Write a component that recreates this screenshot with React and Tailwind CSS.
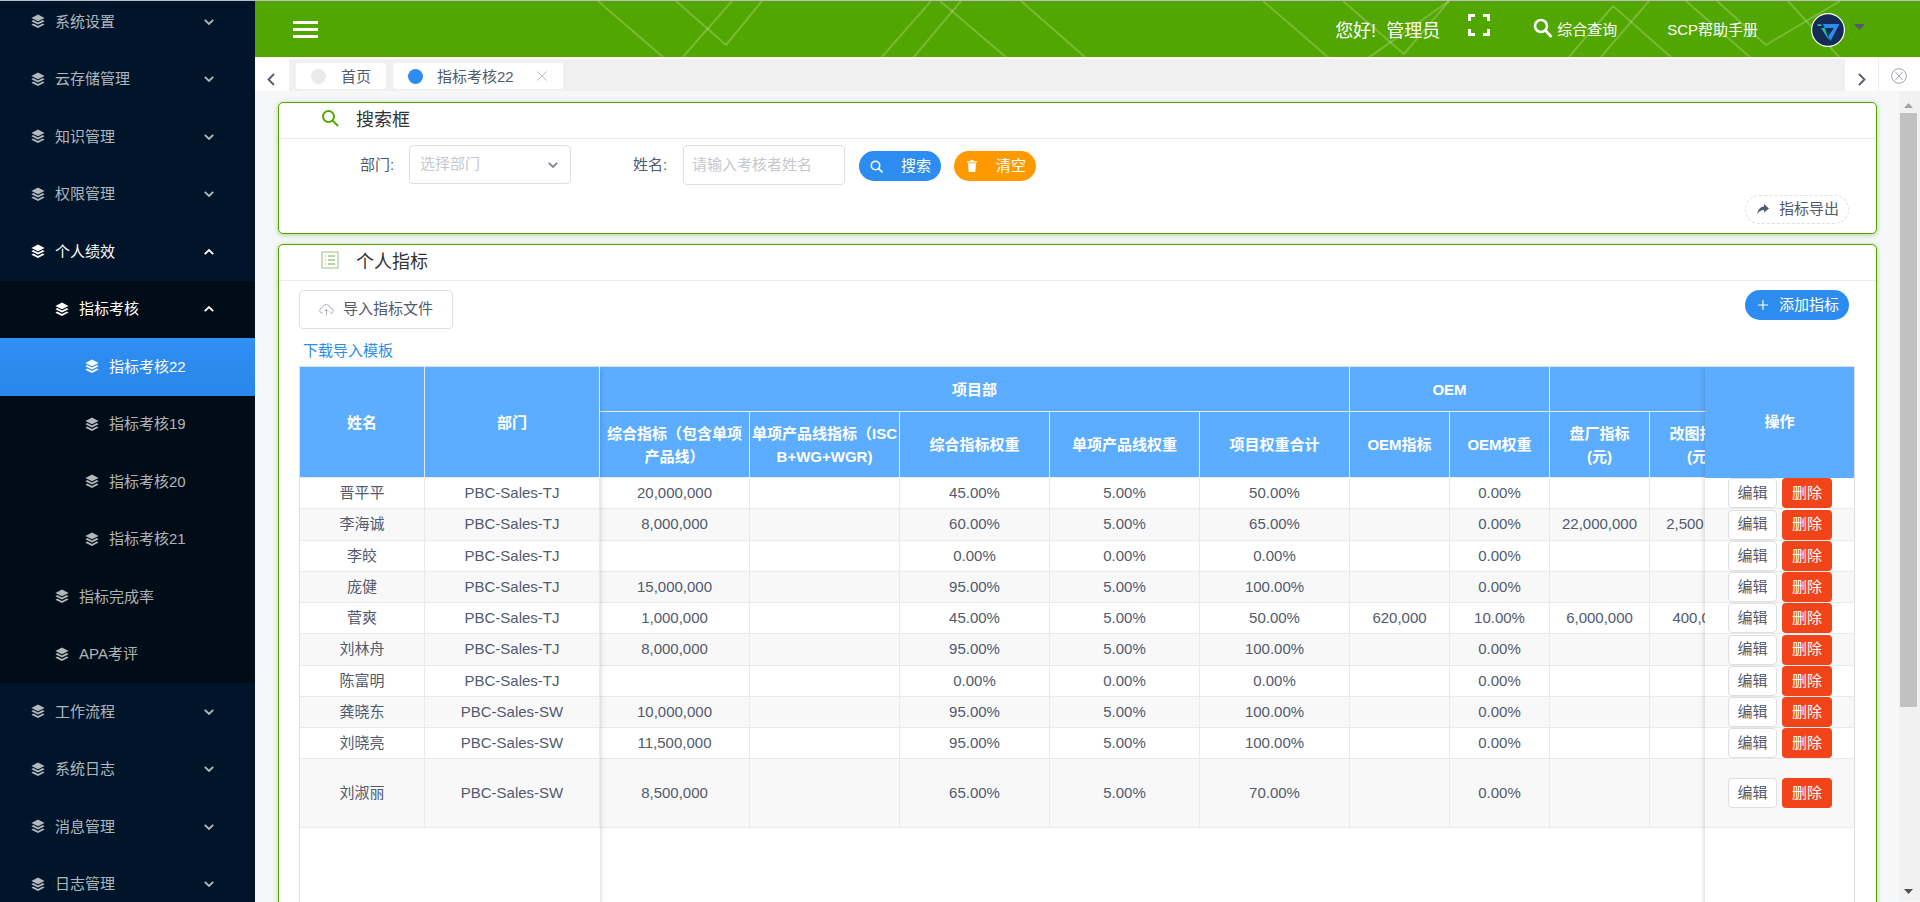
import React from 'react';

const Layers = ({ className = 'w-[14px] h-[15px]' }) => (
  <svg viewBox="0 0 14 15" className={`${className} fill-current shrink-0`}>
    <path d="M7 .5 13.6 3.900 7 7.300.4 3.900Z" />
    <path d="M2.200 6.100 7 8.600l4.800-2.500 1.800 1.100L7 10.600.4 7.200Z" />
    <path d="M2.200 9.500 7 12l4.800-2.500 1.800 1.100L7 14.100.4 10.700Z" />
  </svg>
);

const Chevron = ({ up }) => (
  <svg viewBox="0 0 10 6" className="w-[10px] h-[6px] shrink-0">
    <path d={up ? 'M.8 5.200 5 1l4.200 4.200' : 'M.8.8 5 5 9.200.8'} fill="none" stroke="currentColor" strokeWidth="1.800" />
  </svg>
);

const MenuItem = ({ label, indent = 'pl-[31px]', tone = 'text-white/70', chevron, up, cls = '' }) => (
  <div className={`h-[57.5px] flex items-center ${indent} pr-[41px] ${tone} ${cls} text-[15px]`}>
    <Layers />
    <span className="ml-[10px] flex-1 whitespace-nowrap">{label}</span>
    {chevron && <Chevron up={up} />}
  </div>
);

const Sidebar = () => (
  <aside className="w-[255px] shrink-0 bg-[#001529] overflow-hidden">
    <div className="-mt-[8px]">
      <MenuItem label="系统设置" chevron />
      <MenuItem label="云存储管理" chevron />
      <MenuItem label="知识管理" chevron />
      <MenuItem label="权限管理" chevron />
      <MenuItem label="个人绩效" chevron up tone="text-white" />
      <div className="bg-[#000c17]">
        <MenuItem label="指标考核" indent="pl-[55px]" chevron up tone="text-white" />
        <MenuItem label="指标考核22" indent="pl-[85px]" tone="text-white" cls="bg-gradient-to-b from-[#2f8ff2] to-[#2a86ea]" />
        <MenuItem label="指标考核19" indent="pl-[85px]" />
        <MenuItem label="指标考核20" indent="pl-[85px]" />
        <MenuItem label="指标考核21" indent="pl-[85px]" />
        <MenuItem label="指标完成率" indent="pl-[55px]" />
        <MenuItem label="APA考评" indent="pl-[55px]" />
      </div>
      <MenuItem label="工作流程" chevron />
      <MenuItem label="系统日志" chevron />
      <MenuItem label="消息管理" chevron />
      <MenuItem label="日志管理" chevron />
    </div>
  </aside>
);

const headerLines = [
  [343, 0, 409, 57], [421, 0, 471, 44], [471, 44, 507, 0], [477, 0, 427, 57],
  [676, 0, 626, 57], [685, 0, 752, 57], [706, 0, 658, 57], [766, 0, 831, 57],
  [1008, 0, 1074, 57], [1088, 0, 1149, 53], [1149, 53, 1194, 0], [1194, 0, 1113, 57],
  [1313, 57, 1358, 5], [1358, 5, 1417, 57], [1394, 0, 1345, 57], [1431, 0, 1496, 57],
  [1462, 0, 1511, 44], [1511, 44, 1585, 0], [1533, 0, 1585, 57],
];

const Header = () => (
  <header className="relative h-[56px] shrink-0 bg-[#52a600] flex items-center overflow-hidden text-white">
    <svg className="absolute left-0 top-0 w-[1665px] h-[56px]" viewBox="0 0 1665 56">
      {headerLines.map((l, i) => (
        <line key={i} x1={l[0]} y1={l[1]} x2={l[2]} y2={l[3]} stroke="#fff" strokeOpacity="0.22" strokeWidth="2" />
      ))}
    </svg>
    <div className="relative ml-[38px] flex flex-col gap-[4px] w-[25px]">
      <div className="h-[3px] bg-white" />
      <div className="h-[3px] bg-white" />
      <div className="h-[3px] bg-white" />
    </div>
    <div className="relative ml-auto flex items-center">
      <span className="text-[18px] whitespace-pre mt-[5px]">您好!  管理员</span>
      <svg viewBox="0 0 22 22" className="ml-[28px] w-[22px] h-[22px] -mt-[8px]" fill="none" stroke="#fff" strokeWidth="3">
        <path d="M1.500 7V1.500H7M15 1.500h5.500V7M20.500 15v5.500H15M7 20.500H1.500V15" />
      </svg>
      <svg viewBox="0 0 20 20" className="ml-[43px] w-[20px] h-[20px] -mt-[2px]" fill="none" stroke="#fff" strokeWidth="2.600">
        <circle cx="8" cy="8" r="6" />
        <path d="m12.500 12.500 6 6.500" />
      </svg>
      <span className="ml-[4px] text-[15px] mt-[2px] whitespace-nowrap">综合查询</span>
      <span className="ml-[50px] text-[15px] mt-[2px] whitespace-nowrap">SCP帮助手册</span>
      <svg viewBox="0 0 34 34" className="ml-[53px] w-[34px] h-[34px] mt-[2px]">
        <circle cx="17" cy="17" r="16.400" fill="#152a55" stroke="#fff" strokeWidth="1.200" />
        <path d="M12 11h16.500l-9 17-2.400-4.500 5.800-8.500H13.500Z" fill="#2d8cf0" />
        <path d="M6 11.200h4l.8 1.800H7ZM10 15h3.800l4.400 12.500Z" fill="#13c2a3" />
      </svg>
      <svg viewBox="0 0 11 6" className="ml-[9px] mr-[55px] w-[11px] h-[6px] -mt-[4px]">
        <path d="M0 0h11L5.500 6Z" fill="#515a6e" />
      </svg>
    </div>
  </header>
);

const TabBar = () => (
  <div className="h-[34px] shrink-0 bg-white flex text-[#515a6e]">
    <div className="w-[34px] shrink-0 flex items-center justify-center pt-[10px] pr-[2px]">
      <svg viewBox="0 0 8 13" className="w-[8px] h-[13px]"><path d="M7 1 1.500 6.500 7 12" fill="none" stroke="#515a6e" strokeWidth="1.800" /></svg>
    </div>
    <div className="flex-1 mt-[2px] bg-[#f0f0f0] flex items-start pl-[7px] gap-[7px] pt-[4px]">
      <div className="w-[90px] h-[26px] bg-white rounded-[3px] flex items-center pl-[15px]">
        <span className="w-[15px] h-[15px] rounded-full bg-[#e8eaec]" />
        <span className="ml-[15px] mt-[2px] text-[15px] whitespace-nowrap">首页</span>
      </div>
      <div className="w-[170px] h-[26px] bg-white rounded-[3px] flex items-center pl-[15px]">
        <span className="w-[15px] h-[15px] rounded-full bg-[#2d8cf0]" />
        <span className="ml-[14px] mt-[2px] text-[15px] whitespace-nowrap">指标考核22</span>
        <svg viewBox="0 0 10 10" className="ml-[23px] w-[10px] h-[10px]"><path d="M.5.5l9 9M9.500.5l-9 9" stroke="#b5b8be" strokeWidth="1" /></svg>
      </div>
    </div>
    <div className="w-[34px] shrink-0 flex items-center justify-center pt-[10px] border-r border-[#f0f0f0]">
      <svg viewBox="0 0 8 13" className="w-[8px] h-[13px]"><path d="M1 1l5.500 5.500L1 12" fill="none" stroke="#515a6e" strokeWidth="1.800" /></svg>
    </div>
    <div className="w-[41px] shrink-0 flex items-center justify-center mt-[3px] pr-[2px]">
      <svg viewBox="0 0 16 16" className="w-[16px] h-[16px]" fill="none" stroke="#9ea2ab" strokeWidth="1">
        <circle cx="8" cy="8" r="7.300" /><path d="m4.500 4 7 8M11.500 4l-7 8" />
      </svg>
    </div>
  </div>
);

const Card = ({ title, icon, children, cls = '' }) => (
  <section className={`bg-white border border-[#52a600] rounded-[5px] shadow-[0_1px_5px_rgba(82,166,0,0.45)] ${cls}`}>
    <div className="h-[36px] border-b border-[#e8eaec] flex items-center pl-[42px]">
      {icon}
      <span className="ml-[17px] -mt-[2px] text-[18px] text-[#333] leading-none">{title}</span>
    </div>
    {children}
  </section>
);

const columns = ['w-[125px]', 'w-[175px]', 'w-[150px]', 'w-[150px]', 'w-[150px]', 'w-[150px]', 'w-[150px]', 'w-[100px]', 'w-[100px]', 'w-[100px]', 'w-[100px]', 'w-[104px]'];

const rows = [
  { h: 'h-[31px]', n: '晋平平', d: 'PBC-Sales-TJ', v: ['20,000,000', '', '45.00%', '5.00%', '50.00%', '', '0.00%', '', ''] },
  { h: 'h-[32px]', n: '李海诚', d: 'PBC-Sales-TJ', v: ['8,000,000', '', '60.00%', '5.00%', '65.00%', '', '0.00%', '22,000,000', '2,500,000'] },
  { h: 'h-[31px]', n: '李皎', d: 'PBC-Sales-TJ', v: ['', '', '0.00%', '0.00%', '0.00%', '', '0.00%', '', ''] },
  { h: 'h-[31px]', n: '庞健', d: 'PBC-Sales-TJ', v: ['15,000,000', '', '95.00%', '5.00%', '100.00%', '', '0.00%', '', ''] },
  { h: 'h-[31px]', n: '菅爽', d: 'PBC-Sales-TJ', v: ['1,000,000', '', '45.00%', '5.00%', '50.00%', '620,000', '10.00%', '6,000,000', '400,000'] },
  { h: 'h-[32px]', n: '刘林舟', d: 'PBC-Sales-TJ', v: ['8,000,000', '', '95.00%', '5.00%', '100.00%', '', '0.00%', '', ''] },
  { h: 'h-[31px]', n: '陈富明', d: 'PBC-Sales-TJ', v: ['', '', '0.00%', '0.00%', '0.00%', '', '0.00%', '', ''] },
  { h: 'h-[31px]', n: '龚晓东', d: 'PBC-Sales-SW', v: ['10,000,000', '', '95.00%', '5.00%', '100.00%', '', '0.00%', '', ''] },
  { h: 'h-[31px]', n: '刘晓亮', d: 'PBC-Sales-SW', v: ['11,500,000', '', '95.00%', '5.00%', '100.00%', '', '0.00%', '', ''] },
  { h: 'h-[69px]', n: '刘淑丽', d: 'PBC-Sales-SW', v: ['8,500,000', '', '65.00%', '5.00%', '70.00%', '', '0.00%', '', ''] },
];

const th = 'border-r border-b border-[#e8eaec] font-bold text-white text-center text-[15px] leading-[23px] p-0 whitespace-nowrap overflow-hidden';
const td = 'border-r border-b border-[#e8eaec] text-center p-0 whitespace-nowrap overflow-hidden';

const DataTable = () => (
  <div className="relative mt-[5px] ml-[20px] mr-[21px] h-[600px] border border-[#dcdee2] overflow-hidden">
    <table className="table-fixed border-separate border-spacing-0 w-[1554px] text-[15px] text-[#515a6e]">
      <colgroup>
        {columns.map((c, i) => <col key={i} className={c} />)}
      </colgroup>
      <thead className="bg-[#5cadff]">
        <tr className="h-[45px]">
          <th rowSpan={2} className={th}>姓名</th>
          <th rowSpan={2} className={th}>部门</th>
          <th colSpan={5} className={th}>项目部</th>
          <th colSpan={2} className={th}>OEM</th>
          <th colSpan={3} className={th}></th>
        </tr>
        <tr className="h-[66px]">
          <th className={th}>综合指标（包含单项<br />产品线）</th>
          <th className={th}>单项产品线指标（ISC<br />B+WG+WGR)</th>
          <th className={th}>综合指标权重</th>
          <th className={th}>单项产品线权重</th>
          <th className={th}>项目权重合计</th>
          <th className={th}>OEM指标</th>
          <th className={th}>OEM权重</th>
          <th className={th}>盘厂指标<br />(元)</th>
          <th className={th}>改图指标<br />(元)</th>
          <th className={th}></th>
          <th className={th}></th>
        </tr>
      </thead>
      <tbody>
        {rows.map((r, i) => (
          <tr key={i} className={`${r.h} ${i % 2 ? 'bg-[#f8f8f9]' : 'bg-white'}`}>
            <td className={td}>{r.n}</td>
            <td className={td}>{r.d}</td>
            {r.v.map((v, j) => <td key={j} className={td}>{v}</td>)}
            <td className={td}></td>
            <td className={td}></td>
          </tr>
        ))}
      </tbody>
    </table>

    <div className="absolute left-0 top-0 bottom-0 w-[300px] shadow-[2px_0_6px_-2px_rgba(0,0,0,0.2)] pointer-events-none" />

    <div className="absolute right-0 top-0 bottom-0 w-[149px] bg-white shadow-[-2px_0_6px_-2px_rgba(0,0,0,0.2)] text-[15px]">
      <div className="h-[111px] bg-[#5cadff] flex items-center justify-center font-bold text-white">操作</div>
      {rows.map((r, i) => (
        <div key={i} className={`${r.h} border-b border-[#e8eaec] flex items-center pl-[23px] gap-[5px] ${i % 2 ? 'bg-[#f8f8f9]' : 'bg-white'}`}>
          <button className="w-[49px] h-[30px] bg-white border border-[#dcdee2] rounded-[4px] text-[#515a6e] flex items-center justify-center">编辑</button>
          <button className="w-[50px] h-[30px] bg-[#f14418] rounded-[4px] text-white flex items-center justify-center">删除</button>
        </div>
      ))}
    </div>
  </div>
);

const SearchCard = () => (
  <Card
    title="搜索框"
    icon={
      <svg viewBox="0 0 18 18" className="w-[18px] h-[18px] -mt-[5px]" fill="none" stroke="#52a600" strokeWidth="2">
        <circle cx="7.500" cy="7.500" r="5.500" /><path d="m11.500 11.500 5.500 5.500" />
      </svg>
    }
  >
    <div className="pt-[6px] h-[94px]">
      <div className="flex items-start text-[15px] text-[#515a6e]">
        <span className="ml-[81px] mt-[9px] w-[33px] whitespace-nowrap">部门:</span>
        <div className="ml-[16px] w-[162px] h-[39px] border border-[#dcdee2] rounded-[4px] flex items-center justify-between pl-[10px] pr-[12px]">
          <span className="text-[#c5c8ce] whitespace-nowrap">选择部门</span>
          <span className="text-[#808695]"><Chevron /></span>
        </div>
        <span className="ml-[62px] mt-[9px] w-[34px] whitespace-nowrap">姓名:</span>
        <div className="ml-[16px] w-[162px] h-[40px] border border-[#dcdee2] rounded-[4px] flex items-center pl-[8px]">
          <span className="text-[#c5c8ce] whitespace-nowrap">请输入考核者姓名</span>
        </div>
        <button className="ml-[14px] mt-[6px] w-[82px] h-[30px] rounded-full bg-[#2d8cf0] text-white flex items-center pl-[11px]">
          <svg viewBox="0 0 13 13" className="w-[13px] h-[13px]" fill="none" stroke="#fff" strokeWidth="1.600">
            <circle cx="5.500" cy="5.500" r="4.200" /><path d="m8.500 8.500 4 4" />
          </svg>
          <span className="ml-[18px]">搜索</span>
        </button>
        <button className="ml-[13px] mt-[6px] w-[82px] h-[30px] rounded-full bg-[#ff9900] text-white flex items-center pl-[13px]">
          <svg viewBox="0 0 10 12" className="w-[10px] h-[12px]" fill="#fff">
            <path d="M3.500 0h3v1.200H10v1.300H0V1.200h3.500ZM1 3.300h8L8.300 12H1.700Z" />
          </svg>
          <span className="ml-[19px]">清空</span>
        </button>
      </div>
      <div className="flex justify-end mr-[27px] mt-[10px]">
        <div className="w-[104px] h-[29px] border border-dashed border-[#dcdee2] rounded-full flex items-center pl-[11px] text-[15px] text-[#515a6e]">
          <svg viewBox="0 0 12 11" className="w-[12px] h-[11px]" fill="#515a6e">
            <path d="M7 0l5 4.500L7 8.500V6C4 6 2 7 .5 10.500.5 6 3 2.800 7 2.500Z" />
          </svg>
          <span className="ml-[10px] whitespace-nowrap">指标导出</span>
        </div>
      </div>
    </div>
  </Card>
);

const IndicatorCard = () => (
  <Card
    cls="mt-[10px]"
    title="个人指标"
    icon={
      <svg viewBox="0 0 18 18" className="w-[18px] h-[18px] -mt-[5px]" fill="none" strokeWidth="1">
        <rect x="1" y="1" width="16" height="16" stroke="#9cc27a" />
        <path d="M4 5h1M4 9h1M4 13h1" stroke="#e0a040" />
        <path d="M7 5h7M7 9h7M7 13h7" stroke="#6fb04a" />
      </svg>
    }
  >
    <div className="pt-[9px]">
      <div className="flex items-start justify-between ml-[20px] mr-[27px] text-[15px]">
        <div className="w-[154px] h-[39px] border border-[#dcdee2] rounded-[4px] flex items-center pl-[19px] text-[#515a6e]">
          <svg viewBox="0 0 16 13" className="w-[15px] h-[13px]" fill="none" stroke="#a8acb4" strokeWidth="1">
            <path d="M4 10.500H3.500a3 3 0 0 1-.4-5.900 4.800 4.800 0 0 1 9.300.5 2.700 2.700 0 0 1 .1 5.400H12M8 12.500V6.500M5.800 8.500 8 6.300l2.200 2.200" />
          </svg>
          <span className="ml-[9px] whitespace-nowrap">导入指标文件</span>
        </div>
        <div className="w-[104px] h-[30px] rounded-full bg-[#2d8cf0] text-white flex items-center pl-[12px]">
          <svg viewBox="0 0 12 12" className="w-[12px] h-[12px]" fill="none" stroke="#fff" strokeWidth="1.200"><path d="M6 1v10M1 6h10" /></svg>
          <span className="ml-[10px] whitespace-nowrap">添加指标</span>
        </div>
      </div>
      <div className="ml-[24px] mt-[12px] h-[20px] leading-[20px] text-[15px] text-[#2d8cf0]">下载导入模板</div>
      <DataTable />
    </div>
  </Card>
);

const Scrollbar = () => (
  <div className="w-[21px] shrink-0 bg-[#f1f1f1] flex flex-col items-center pr-[2px] pt-[12px] pb-[7px] ml-[-2px] h-[810px]">
    <svg viewBox="0 0 9 5" className="w-[9px] h-[5px] shrink-0"><path d="M4.500 0 9 5H0Z" fill="#a3a3a3" /></svg>
    <div className="mt-[5px] w-[17px] h-[594px] bg-[#c1c1c1] shrink-0" />
    <svg viewBox="0 0 9 5" className="mt-auto w-[9px] h-[5px] shrink-0"><path d="M0 0h9L4.500 5Z" fill="#505050" /></svg>
  </div>
);

export default function App() {
  return (
    <div className="w-[1920px] h-[902px] overflow-hidden font-['Liberation_Sans','Noto_Sans_CJK_SC',sans-serif]">
      <div className="h-px bg-[#bdbdbd]" />
      <div className="flex h-[901px]">
        <Sidebar />
        <main className="flex-1 min-w-0 flex flex-col overflow-hidden">
          <Header />
          <TabBar />
          <div className="flex flex-1 min-h-0 bg-[#f5f7f9]">
            <div className="w-[1646px] shrink-0 pt-[11px] pl-[23px] pr-[24px] overflow-hidden">
              <SearchCard />
              <IndicatorCard />
            </div>
            <Scrollbar />
          </div>
        </main>
      </div>
    </div>
  );
}
